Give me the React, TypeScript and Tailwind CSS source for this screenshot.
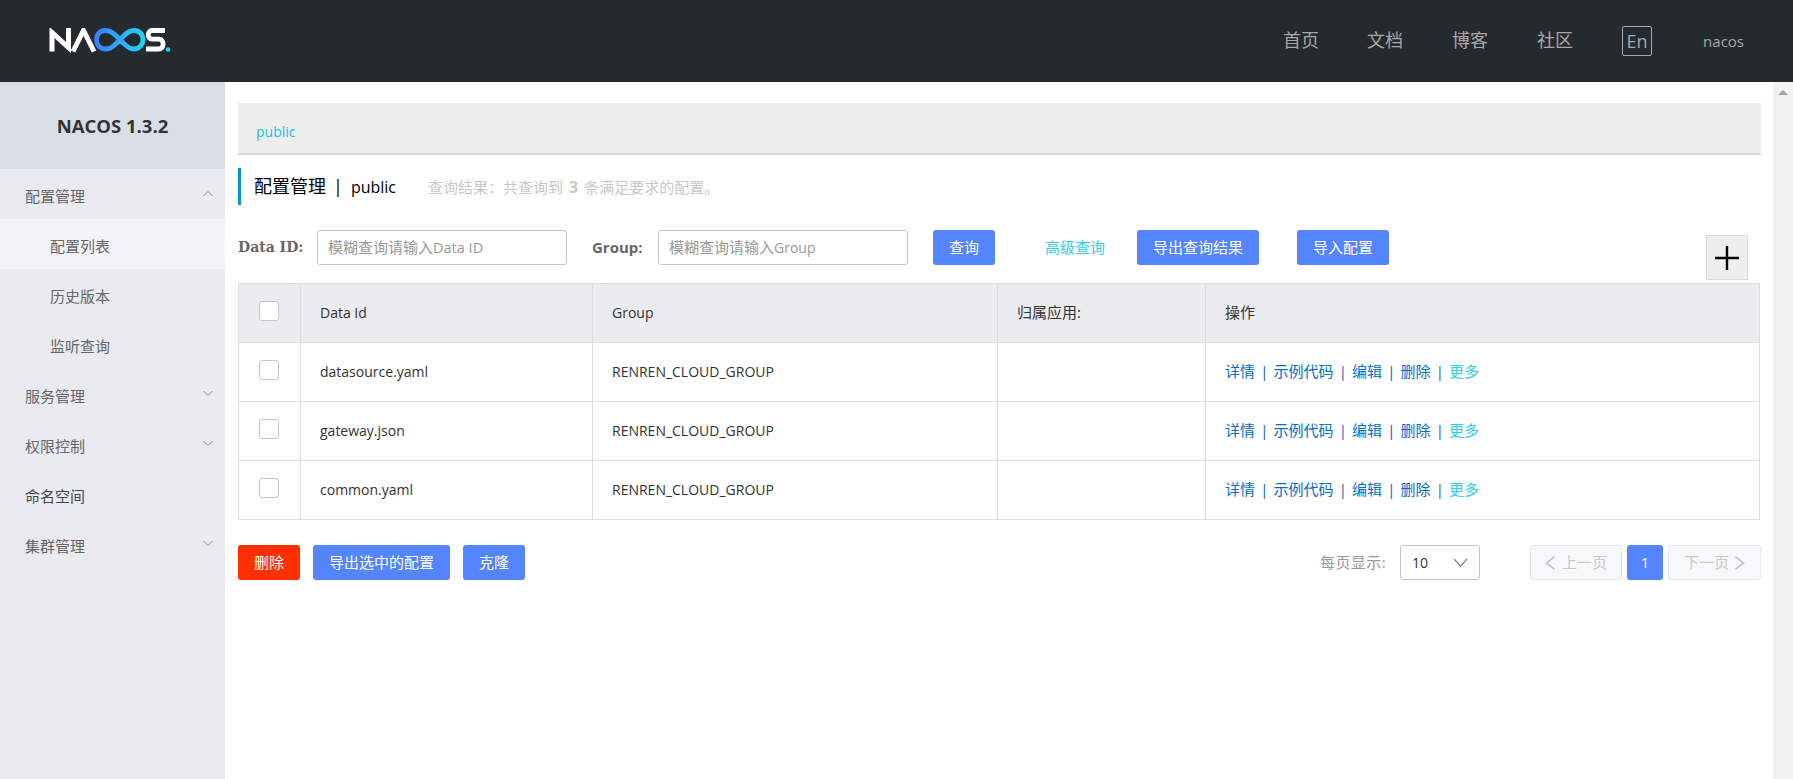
import React from "react";

const FONT = "[font-family:'Open_Sans','Noto_Sans_CJK_SC',sans-serif]";

function Logo() {
  return (
    <svg width="122" height="26" viewBox="0 1.5 122 26" className="block">
      <defs>
        <linearGradient id="inf" x1="0" x2="1" y1="0" y2="0">
          <stop offset="0" stopColor="#3a7fff" />
          <stop offset="1" stopColor="#1fd4f5" />
        </linearGradient>
      </defs>
      <path d="M3 25 V6 L19.5 21 V1.5" fill="none" stroke="#fff" strokeWidth="5" />
      <path d="M24 25 L34.5 4 L45 25" fill="none" stroke="#fff" strokeWidth="5" />
      <path
        d="M57 22.5 C50.5 22.5 47.5 18 47.5 13.3 C47.5 8 50.5 4 56.5 4 C64 4 67 9.5 71 13.3 C75 16.8 78 22.5 85 22.5 C90.5 22.5 94 18 94 13.3 C94 8 90.5 4 85 4 C78 4 75 9.5 71 13.3 C67 16.8 64 22.5 57 22.5 Z"
        fill="none"
        stroke="url(#inf)"
        strokeWidth="4.8"
      />
      <path d="M116 4 H103 C98 4 98 12.7 103 12.7 H110 C115.5 12.7 115.5 22.5 110 22.5 H97" fill="none" stroke="#fff" strokeWidth="4.8" />
      <circle cx="119" cy="23" r="2.3" fill="#1fd4f5" />
    </svg>
  );
}

function Chevron({ up }: { up?: boolean }) {
  return (
    <svg width="10" height="7" viewBox="0 0 10 7" className="absolute right-[12px] top-[21px]">
      <path d={up ? "M0.5 6 L5 1.5 L9.5 6" : "M0.5 1 L5 5.5 L9.5 1"} fill="none" stroke="#8a8f99" strokeWidth="1" />
    </svg>
  );
}

function NavItem({ label, chevron, dark }: { label: string; chevron?: "up" | "down"; dark?: boolean }) {
  return (
    <div className={`relative h-[50px] flex items-center pl-[25px] pt-[4px] text-[15px] ${dark ? "text-[#444]" : "text-[#666]"}`}>
      {label}
      {chevron && <Chevron up={chevron === "up"} />}
    </div>
  );
}

function SubItem({ label, active }: { label: string; active?: boolean }) {
  return (
    <div className={`h-[50px] flex items-center pl-[50px] pt-[4px] text-[15px] text-[#666] ${active ? "bg-[#f2f3f7]" : ""}`}>
      {label}
    </div>
  );
}

function Btn({ children, className = "" }: { children: React.ReactNode; className?: string }) {
  return (
    <button className={`h-[35px] rounded-[3px] text-white text-[15px] bg-[#5584ff] ${className}`}>{children}</button>
  );
}

function Check() {
  return <div className="w-[20px] h-[20px] mx-auto bg-white border border-[#c4c6cf] rounded-[3px] -translate-x-px -translate-y-px" />;
}

function Actions() {
  const sep = <span className="text-[#0a4ea6] text-[14px] mx-[5.4px]">|</span>;
  return (
    <span className="text-[15px] text-[#0070cc] whitespace-nowrap">
      详情{sep}示例代码{sep}编辑{sep}删除{sep}
      <span className="text-[#33cde5]">更多</span>
    </span>
  );
}

const rows = ["datasource.yaml", "gateway.json", "common.yaml"];
const cell = "border border-[#dcdee3] pb-[2px]";
const headCell = "border border-[#dcdee3] font-normal text-left pl-[19px] pb-[2px]";

export default function App() {
  return (
    <div className={`w-[1793px] h-[779px] overflow-hidden flex flex-col bg-white ${FONT}`}>
      <header className="h-[82px] shrink-0 bg-[#252a2f] flex items-center text-[#a8a8a8]">
        <div className="ml-[49px]">
          <Logo />
        </div>
        <nav className="ml-auto flex items-center text-[18px]">
          <span className="pb-[2px]">首页</span>
          <span className="pb-[2px] ml-[48px]">文档</span>
          <span className="pb-[2px] ml-[49px]">博客</span>
          <span className="pb-[2px] ml-[49px]">社区</span>
          <span className="ml-[49px] w-[30px] h-[30px] border border-[#a8a8a8] rounded-[2px] flex items-center justify-center">En</span>
          <span className="ml-[51px] mr-[49px] text-[15px]">nacos</span>
        </nav>
      </header>

      <div className="flex-1 flex min-h-0">
        <aside className="w-[225px] shrink-0 bg-[#e9ebf0]">
          <div className="h-[87px] bg-[#d9dee6] flex items-center justify-center text-[18.5px] font-bold text-[#333]">
            NACOS 1.3.2
          </div>
          <NavItem label="配置管理" chevron="up" />
          <SubItem label="配置列表" active />
          <SubItem label="历史版本" />
          <SubItem label="监听查询" />
          <NavItem label="服务管理" chevron="down" />
          <NavItem label="权限控制" chevron="down" />
          <NavItem label="命名空间" dark />
          <NavItem label="集群管理" chevron="down" />
        </aside>

        <main className="flex-1 min-w-0 pl-[13px] pr-[12px] pt-[21px]">
          <div className="h-[52px] bg-[#eeeeee] border-b-2 border-[#d8d8d8] pl-[18px] pt-[19px] text-[14px] leading-[20px] text-[#1bc0dd]">
            public
          </div>

          <div className="mt-[13px] h-[37px] border-l-[3px] border-[#09c] pl-[13px] flex items-center">
            <span className="text-[18px] text-black">配置管理</span>
            <span className="text-[18px] text-black ml-[7px] mr-[8px]">|</span>
            <span className="text-[16px] text-black">public</span>
            <span className="ml-[32px] text-[15px] text-[#c8c8c8]">
              查询结果：共查询到<b className="text-[16px] mx-[6px]">3</b>条满足要求的配置。
            </span>
          </div>

          <div className="mt-[25px] h-[53px] flex items-start">
            <label className="h-[35px] leading-[35px] text-[14px] font-bold text-[#666] w-[79px] [font-family:'DejaVu_Serif',serif]">Data ID:</label>
            <div className="w-[250px] h-[35px] border border-[#c4c6cf] rounded-[3px] pl-[10px] text-[15px] leading-[33px] text-[#999]">模糊查询请输入<span className="text-[14.5px]">Data ID</span></div>
            <label className="ml-[25px] w-[66px] h-[35px] leading-[35px] text-[15px] font-bold text-[#666]">Group:</label>
            <div className="w-[250px] h-[35px] border border-[#c4c6cf] rounded-[3px] pl-[10px] text-[15px] leading-[33px] text-[#999]">模糊查询请输入<span className="text-[14px]">Group</span></div>
            <Btn className="ml-[25px] w-[62px]">查询</Btn>
            <span className="ml-[50px] h-[35px] leading-[35px] text-[15px] text-[#33cde5]">高级查询</span>
            <Btn className="ml-[32px] w-[122px]">导出查询结果</Btn>
            <Btn className="ml-[38px] w-[92px]">导入配置</Btn>
            <div className="ml-auto mr-[13px] mt-[5px] w-[42px] h-[45px] bg-[#eeeeee] border border-[#dcdcdc] flex items-center justify-center">
              <svg width="26" height="26" viewBox="0 0 26 26">
                <path d="M13 1 V25 M1 13 H25" stroke="#000" strokeWidth="2.4" fill="none" />
              </svg>
            </div>
          </div>

          <table className="w-[1522px] table-fixed border-collapse text-[14px] text-[#333]">
            <colgroup>
              <col className="w-[62px]" />
              <col className="w-[292px]" />
              <col className="w-[405px]" />
              <col className="w-[208px]" />
              <col />
            </colgroup>
            <thead>
              <tr className="h-[59px] bg-[#ebecf0]">
                <th className="border border-[#dcdee3] font-normal pb-[2px]"><Check /></th>
                <th className={headCell}>Data Id</th>
                <th className={headCell}>Group</th>
                <th className={`${headCell} text-[15px]`}>归属应用:</th>
                <th className={`${headCell} text-[15px]`}>操作</th>
              </tr>
            </thead>
            <tbody>
              {rows.map((r) => (
                <tr key={r} className="h-[59px]">
                  <td className={cell}><Check /></td>
                  <td className={`${cell} pl-[19px]`}>{r}</td>
                  <td className={`${cell} pl-[19px]`}>RENREN_CLOUD_GROUP</td>
                  <td className={`${cell} pl-[19px]`}></td>
                  <td className={`${cell} pl-[19px]`}><Actions /></td>
                </tr>
              ))}
            </tbody>
          </table>

          <div className="mt-[25px] flex items-center">
            <Btn className="w-[62px] bg-[#ff3000]">删除</Btn>
            <Btn className="ml-[13px] w-[137px]">导出选中的配置</Btn>
            <Btn className="ml-[13px] w-[62px]">克隆</Btn>
            <span className="ml-auto text-[15px] text-[#999] tracking-[0.4px]">每页显示:</span>
            <div className="ml-[14px] w-[80px] h-[35px] border border-[#c4c6cf] rounded-[3px] flex items-center justify-between pl-[11px] pr-[11px] text-[14px] text-[#333]">
              10
              <svg width="15" height="9" viewBox="0 0 15 9">
                <path d="M1 1 L7.5 8 L14 1" fill="none" stroke="#888" strokeWidth="1.2" />
              </svg>
            </div>
            <div className="ml-[50px] w-[92px] h-[35px] border border-[#e6e7eb] bg-[#f7f8fa] rounded-[3px] flex items-center justify-center text-[15px] text-[#c8c8c8]">
              <svg width="10" height="14" viewBox="0 0 10 14" className="mr-[7px]">
                <path d="M9.5 0.8 L1.5 7 L9.5 13.2" fill="none" stroke="#c8c8c8" strokeWidth="1.8" />
              </svg>
              上一页
            </div>
            <div className="ml-[5px] w-[36px] h-[35px] bg-[#5584ff] rounded-[3px] flex items-center justify-center text-[14px] text-white">1</div>
            <div className="ml-[5px] w-[93px] h-[35px] border border-[#e6e7eb] bg-[#f7f8fa] rounded-[3px] flex items-center justify-center text-[15px] text-[#c8c8c8]">
              下一页
              <svg width="10" height="14" viewBox="0 0 10 14" className="ml-[6px]">
                <path d="M0.5 0.8 L8.5 7 L0.5 13.2" fill="none" stroke="#c8c8c8" strokeWidth="1.8" />
              </svg>
            </div>
          </div>
        </main>

        <div className="w-[20px] shrink-0 bg-[#f1f1f1] flex justify-center pt-[8px]">
          <div className="w-0 h-0 border-l-[5px] border-r-[5px] border-b-[5px] border-l-transparent border-r-transparent border-b-[#a3a3a3]" />
        </div>
      </div>
    </div>
  );
}
